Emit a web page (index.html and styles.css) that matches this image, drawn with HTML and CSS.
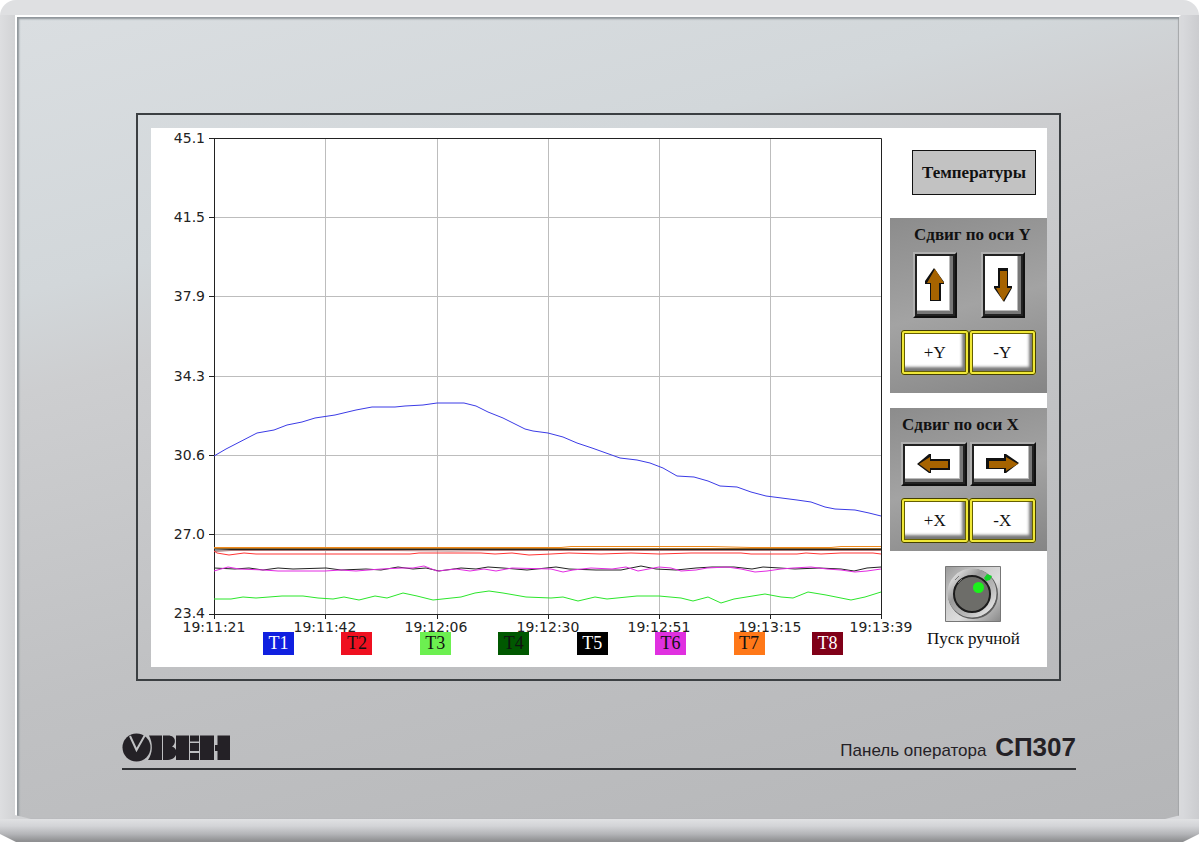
FILE: index.html
```html
<!DOCTYPE html>
<html lang="ru">
<head>
<meta charset="utf-8">
<meta name="viewport" content="width=device-width, initial-scale=1">
<title>ОВЕН СП307</title>
<link rel="stylesheet" href="styles.css">
</head>
<body>
<main class="device">
  <div class="face">
    <section class="bezel">
      <div class="screen">
        <div class="trend">
          <svg class="chart" viewBox="0 0 739 504" role="img" aria-label="График температур">
            <g class="grid">
              <path d="M63 89.500H730M63 168.500H730M63 248.500H730M63 327.500H730M63 406.500H730M174.500 10V486M286.500 10V486M397.500 10V486M508.500 10V486M619.500 10V486"/>
            </g>
            <g class="axis">
              <path d="M58 10.500H730.500V491M58 486.500H730.500M63.500 10V491M58 89.500h5M58 168.500h5M58 248.500h5M58 327.500h5M58 406.500h5M174.500 486v5M286.500 486v5M397.500 486v5M508.500 486v5M619.500 486v5"/>
            </g>
            <g class="series">
              <path class="t8" d="M63 423.500L80 422.500L150 422.500L240 422.500L300 423L340 422.500L730 422.500"/>
              <path class="t4" d="M63 420.500L730 420.500"/>
              <path class="t5" d="M63 422L80 421.500L730 421.500"/>
              <path class="t7" d="M63 419.500L410 419.500L420 418.500L560 418.500L600 419.500L680 419.500L690 418.500L730 418.500"/>
              <path class="t2" d="M63 423L66 425L78 427L93 425L105 426L259 426L268 425L330 425L344 426L361 425L378 427L400 426L418 425L450 426L480 425L508 426L540 425L590 425L600 426L646 426L655 425L670 426L690 425L722 425L730 426"/>
              <path class="t5" d="M63 440L84 441L98 440L112 442L127 440L142 441L175 440L190 442L215 441L230 442L247 439L262 441L275 440L288 443L310 440L325 441L337 439L352 440L364 441L376 442L405 439L418 441L445 442L470 442L490 438L505 441L525 442L545 440L561 439L583 439L601 441L612 439L629 440L644 441L668 440L690 441L703 443L716 440L730 439"/>
              <path class="t6" d="M63 443L77 439L88 441L113 442L127 443L174 443L190 442L205 443L230 441L252 440L262 440L273 438L286 443L305 441L319 443L333 441L345 443L361 440L400 441L412 444L422 442L440 440L461 441L475 439L487 443L508 439L520 440L530 443L545 442L556 440L576 439L590 441L604 444L616 443L630 441L642 440L660 439L676 441L690 442L704 444L716 443L730 441"/>
              <path class="t3" d="M63 471L80 471L92 469L105 470L131 468L152 468L167 470L182 471L193 469L208 472L224 468L236 470L252 465L266 468L282 472L310 469L324 465L338 463L352 465L375 469L400 470L412 469L427 473L444 469L456 471L486 468L508 468L530 470L542 473L557 469L570 475L583 471L614 466L630 469L642 470L657 464L675 467L700 472L714 469L730 464"/>
              <path class="t1" d="M63 328L75 321L106 305L123 302L136 297L151 294L164 290L184 287L205 282L221 279L244 279L254 278L272 277L286 275L313 275L325 278L337 284L352 290L374 301L382 303L397 305L412 309L426 315L441 320L469 330L486 332L499 335L512 340L526 348L543 349L557 353L569 358L586 359L600 364L615 368L646 372L660 374L674 379L684 381L704 382L718 385L730 388"/>
            </g>
            <g class="labels-y">
              <text x="54" y="15">45.1</text><text x="54" y="94">41.5</text><text x="54" y="173">37.9</text><text x="54" y="253">34.3</text><text x="54" y="332">30.6</text><text x="54" y="411">27.0</text><text x="54" y="490">23.4</text>
            </g>
            <g class="labels-x">
              <text x="63" y="504">19:11:21</text><text x="174" y="504">19:11:42</text><text x="285" y="504">19:12:06</text><text x="397" y="504">19:12:30</text><text x="508" y="504">19:12:51</text><text x="619" y="504">19:13:15</text><text x="730" y="504">19:13:39</text>
            </g>
          </svg>
          <ul class="legend">
            <li class="tag blue">T1</li><li class="tag red">T2</li><li class="tag lime">T3</li><li class="tag green">T4</li><li class="tag black">T5</li><li class="tag pink">T6</li><li class="tag orange">T7</li><li class="tag wine">T8</li>
          </ul>
        </div>
        <aside class="side">
          <h1 class="title">Температуры</h1>
          <section class="pad pad-y">
            <h2>Сдвиг по оси Y</h2>
            <div class="arrows">
              <button class="key tall" type="button" aria-label="Вверх"><svg width="20" height="36" viewBox="0 0 20 36"><path class="shade" d="M9 1L0 14v3h5v17h11V17h3v-2z"/><path class="arrow" d="M10 2L2 16h4v17h8V16h5z"/></svg></button>
              <button class="key tall" type="button" aria-label="Вниз"><svg width="20" height="36" viewBox="0 0 20 36"><path class="shade" d="M5 1h10v18h4v2l-8 14L1 21v-2h4z"/><path class="arrow" d="M7 4h7v17h4l-8 13-7-13h4z"/></svg></button>
            </div>
            <div class="steps">
              <button class="step" type="button">+Y</button><button class="step" type="button">-Y</button>
            </div>
          </section>
          <section class="pad pad-x">
            <h2>Сдвиг по оси X</h2>
            <div class="arrows">
              <button class="key wide" type="button" aria-label="Влево"><svg width="36" height="20" viewBox="0 0 36 20"><path class="shade" d="M1 10L13 0h2v5h19v11H15v3h-2z"/><path class="arrow" d="M3 10l11-7v4h18v7H14v4z"/></svg></button>
              <button class="key wide" type="button" aria-label="Вправо"><svg width="36" height="20" viewBox="0 0 36 20"><path class="shade" d="M1 4h18V0h2l13 9-13 10h-2v-4H1z"/><path class="arrow" d="M4 7h17V3l12 7-12 7v-3H4z"/></svg></button>
            </div>
            <div class="steps">
              <button class="step" type="button">+X</button><button class="step" type="button">-X</button>
            </div>
          </section>
          <button class="start" type="button">
            <svg width="56" height="56" viewBox="0 0 56 56" aria-hidden="true">
              <defs>
                <linearGradient id="plate" x2="1" y2="1"><stop stop-color="#999"/><stop offset=".35" stop-color="#ccc"/><stop offset=".6" stop-color="#ddd"/><stop offset="1" stop-color="#888"/></linearGradient>
                <linearGradient id="ring" x2="1" y2="1"><stop stop-color="#eee"/><stop offset=".35" stop-color="#999"/><stop offset=".7" stop-color="#bbb"/><stop offset="1" stop-color="#eee"/></linearGradient>
              </defs>
              <path fill="url(#plate)" stroke="#777" d="M.5.5h55v55H.5z"/>
              <circle cx="28" cy="28" r="24" fill="none" stroke="#5c5c5c" stroke-width="2"/>
              <circle cx="27" cy="27" r="21" fill="none" stroke="url(#ring)" stroke-width="7"/>
              <circle cx="27" cy="28" r="18" fill="#6d6d69" stroke="#1c1c1c" stroke-width="2"/>
              <path d="M10 14l4-4M13 17l4-4" stroke="#777"/>
              <circle cx="33.500" cy="21.500" r="5.500" fill="#1cf01c"/>
              <path d="M39 12l3-4 5 2-2 4-4 1z" fill="#14d32a"/>
            </svg>
            <span>Пуск ручной</span>
          </button>
        </aside>
      </div>
    </section>
    <footer class="brand">
      <svg class="logo" width="110" height="30" viewBox="0 0 110 30" role="img" aria-label="ОВЕН">
        <circle cx="14.500" cy="14.500" r="14" fill="#242126"/>
        <path d="M8 3l6.500 14L23 2" fill="none" stroke="#c0c1c3" stroke-width="2"/>
        <path fill="#242126" d="M27 2.500h13V27H26c5-7 5-17 1-24.500zM41 2.500h5c9 0 8 9 4 11 7 2 6 13-4 13.500h-5zM54 2.500h13V27H54zM68 2.500h9v6h-9zM68 10h9v8h-9zM68 20h9v7h-9zM78 2.500h14V27H78zM95.500 2.500H108V27H95.500v-9H93v-6h2.500z"/>
      </svg>
      <p class="model">Панель оператора <strong>СП307</strong></p>
    </footer>
  </div>
</main>
</body>
</html>
```
FILE: styles.css
```css
* { box-sizing: border-box; }
body { margin: 0; background: #fff; color: #111; font-family: "Liberation Serif", "Times New Roman", serif; }
h1, h2, p, ul { margin: 0; padding: 0; }
button { margin: 0; padding: 0; font: inherit; color: inherit; cursor: pointer; }
svg { display: block; }

.device {
  min-height: 100vh;
  display: flex;
  margin-right: 1px;
  padding: 15px 18px 24px 15px;
  border-radius: 16px 16px 0 0;
  clip-path: polygon(0 0, 100% 0, 100% calc(100% - 9px), calc(100% - 16px) calc(100% - 1px), 16px calc(100% - 1px), 0 calc(100% - 9px));
  background:
    linear-gradient(to top, #8f9092 2px, #b4b5b8 9px, #d3d4d7 17px, #e0e1e3 24px, transparent 24px),
    linear-gradient(to bottom, #dfe0e2 15px, transparent 15px),
    linear-gradient(to right, #dddee0, #d2d3d5 15px, #dcdddf 50%, #d8d9dc calc(100% - 16px), #cbcccf);
}
.face {
  flex: 1;
  padding: 96px 118px 40px 119px;
  border: 2px solid #fff;
  border-width: 2px 2px 0;
  border-right-color: #d9dadc;
  clip-path: polygon(0 0, 100% 0, 100% calc(100% - 4px), calc(100% - 16px) 100%, 16px 100%, 0 calc(100% - 4px));
  box-shadow: inset 2px 2px 2px #8e9499, inset -1px 0 1px #a4a6a8;
  background: linear-gradient(165deg, #dadee1 0%, #d2d7da 25%, #cdced0 34%, #c0c1c3 62%, #b5b6b8 100%);
}
.bezel { padding: 13px 12px 12px 13px; border: 2px solid #3b3f42; }
.screen { display: flex; background: #fff; }
.trend { flex: 1; min-width: 0; }
.chart { width: 100%; height: auto; overflow: visible; }
.chart path { fill: none; }
.grid path { stroke: #bdbdbd; }
.axis path { stroke: #222; }
.series path { stroke-width: 1; }
.series .t1 { stroke: #3b3be6; }
.series .t2 { stroke: #f33; }
.series .t3 { stroke: #2be62b; }
.series .t4 { stroke: #9a6a28; }
.series .t5 { stroke: #222; }
.series .t6 { stroke: #e22be2; }
.series .t7 { stroke: #f08a1c; }
.series .t8 { stroke: #a77; }
.labels-y, .labels-x { font-family: "DejaVu Sans", sans-serif; fill: #222; }
.labels-y { font-size: 14px; text-anchor: end; }
.labels-x { font-size: 14px; text-anchor: middle; }

.legend { display: flex; justify-content: space-between; padding: 0 47px 12px 112px; list-style: none; }
.tag { width: 31px; line-height: 23px; text-align: center; font-size: 18px; color: #111; }
.blue { background: #1020e0; color: #fff; }
.red { background: #ef1020; }
.lime { background: #6cf050; }
.green { background: #005800; }
.black { background: #000; color: #fff; }
.pink { background: #e030e0; }
.orange { background: #ff7818; }
.wine { background: #800018; color: #fff; }

.side { width: 157px; display: flex; flex-direction: column; padding-top: 22px; }
.title { margin: 0 11px 23px 22px; border: 1px solid #111; background: #c2c2c2; font-size: 17px; line-height: 43px; text-align: center; }
.pad { padding: 6px 11px 8px; background: linear-gradient(165deg, #8c8c8c, #a3a3a3 50%, #858585); }
.pad h2 { padding-left: 1px; font-size: 17px; line-height: 22px; white-space: nowrap; }
.pad-y { margin-bottom: 15px; padding-bottom: 18px; }
.pad-y h2 { padding-left: 13px; }
.pad-x { margin-bottom: 15px; }
.arrows { display: flex; justify-content: space-between; margin: 6px 0 12px; }
.pad-y .arrows { padding: 0 11px 0 12px; }
.key { display: grid; place-items: center; border: 2px solid; border-color: #b0b0b0 #111 #111 #b0b0b0; background: #fff; box-shadow: inset 0 0 0 2px #222, inset -3px -3px 0 2px #777, inset -4px -4px 0 2px #bbb; }
.tall { width: 44px; height: 66px; }
.wide { width: 66px; height: 44px; }
.shade { fill: #111; }
.arrow { fill: #a66300; }
.steps { display: flex; }
.step { flex: 1; height: 45px; border: 3px solid #f0e838; border-radius: 3px; outline: 1px solid #443f00; outline-offset: -1px; background: #fff; box-shadow: inset 0 0 0 1px #665f00, inset -3px -4px 3px 1px #777; font-size: 17px; }
.start { align-self: center; margin-left: 10px; border: 0; background: none; font-size: 17px; white-space: nowrap; }
.start svg { margin: 0 auto 7px; }

.brand { display: flex; justify-content: space-between; align-items: flex-end; margin: 51px -15px 0 -14px; padding-bottom: 5px; border-bottom: 2px solid #303235; color: #242126; }
.model { font: 17px "Liberation Sans", Arial, sans-serif; }
.model strong { margin-left: 4px; font-size: 26px; }
```
